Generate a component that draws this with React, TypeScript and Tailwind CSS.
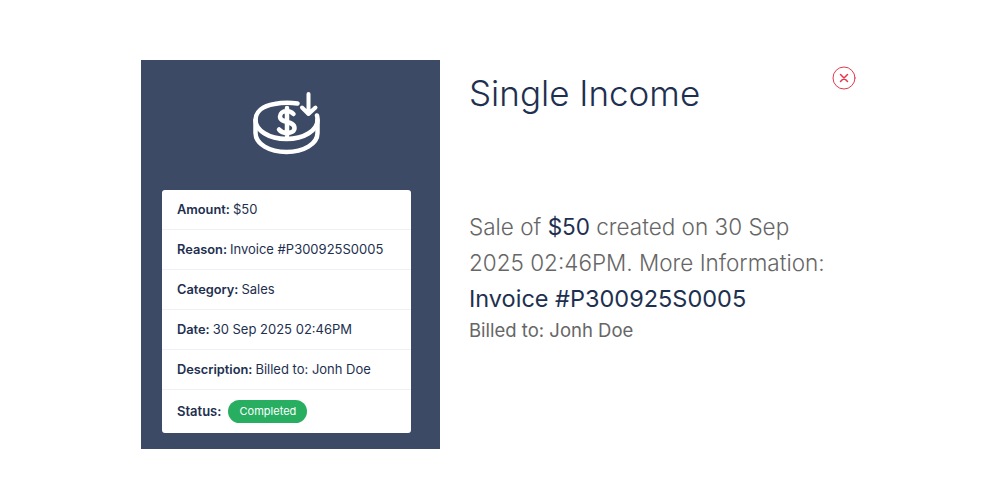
const font = { fontFamily: '"Inter", "Noto Sans", sans-serif' };

const rows = [
  { label: "Amount:", value: "$50" },
  { label: "Reason:", value: "Invoice #P300925S0005" },
  { label: "Category:", value: "Sales" },
  { label: "Date:", value: "30 Sep 2025 02:46PM" },
  { label: "Description:", value: "Billed to: Jonh Doe" },
];

function CoinIcon() {
  return (
    <svg width="110" height="90" viewBox="235.500 80 110 90" fill="none" stroke="white" strokeLinecap="round" strokeLinejoin="round">
      <g strokeWidth="4.500">
        <path d="M297 103.500C291 102.500 281 102.500 274 104C262 106 255 112 255 120C255 130 268 139 286 139C304 139 317 130 317 120C317 118 317 117 316.500 115.500" />
        <path d="M255 120V133C255 144 269 152 286 152C303 152 317 144 317 133V120" />
      </g>
      <path d="M308 94V113.500M301.500 107.500L308 114L315 107.500" strokeWidth="4" />
      <path d="M293 114C291 112 289 111 286.500 111C282 111 279.500 113.500 279.500 116.500C279.500 124 294 120 294 128C294 131 291 133 286.500 133C283.500 133 280.500 132 278.500 129.500M286.500 108V136" strokeWidth="4.500" />
    </svg>
  );
}

function CloseIcon() {
  return (
    <svg width="24" height="24" viewBox="0 0 24 24" fill="none" stroke="#e5384f" strokeLinecap="round">
      <circle cx="12" cy="12" r="11" strokeWidth="1" />
      <path d="M8.500 8.500L15.500 15.500M15.500 8.500L8.500 15.500" strokeWidth="1.500" />
    </svg>
  );
}

export default function App() {
  return (
    <div className="w-[1000px] h-[500px] bg-white pt-[60px] pl-[141px] flex overflow-hidden text-[#1e3050]" style={font}>
      <div className="w-[299px] h-[389px] bg-[#3c4a66] flex flex-col items-center pt-[20px]">
        <CoinIcon />
        <div className="mt-[20px] self-start ml-[21px] w-[249px] bg-white rounded-[3px] flex flex-col text-[13px]">
          {rows.map((row) => (
            <div key={row.label} className="h-[40px] px-[15px] pt-px flex items-center gap-[3px] border-b border-[#f0f1f7]">
              <span className="text-[12.800px] font-semibold">{row.label}</span>
              <span className="font-normal">{row.value}</span>
            </div>
          ))}
          <div className="h-[43px] px-[15px] flex items-center gap-[7px]">
            <span className="font-semibold">Status:</span>
            <span className="w-[79px] h-[23px] rounded-full bg-[#27ae60] text-white text-[11px] font-normal flex items-center justify-center">
              Completed
            </span>
          </div>
        </div>
      </div>
      <div className="w-[357px] pl-[29px] flex flex-col">
        <h1 className="mt-[11px] h-[44px] text-[35px] leading-[44px] font-light">Single Income</h1>
        <div className="mt-[94px] w-[370px] text-[22.500px] leading-[36px] font-light text-[#666666]">
          <p>
            Sale of <span className="font-normal text-[#1e3050]">$50</span> created on 30 Sep
            <br />
            2025 02:46PM. More Information:
          </p>
          <p className="text-[23.500px] font-normal text-[#1e3050]">Invoice #P300925S0005</p>
          <p className="text-[18.500px] leading-[26px] font-normal text-[#666666]">Billed to: Jonh Doe</p>
        </div>
      </div>
      <button className="self-start mt-[6px] ml-[35px] shrink-0">
        <CloseIcon />
      </button>
    </div>
  );
}
